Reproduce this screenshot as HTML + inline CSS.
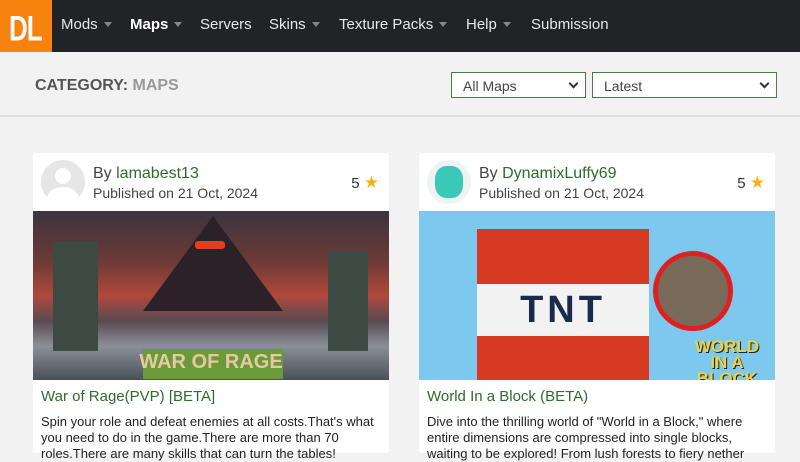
<!DOCTYPE html>
<html><head><meta charset="utf-8"><style>
*{margin:0;padding:0;box-sizing:border-box}
body{width:800px;height:450px;overflow:hidden;background:#f2f2f2;font-family:"Liberation Sans",sans-serif;position:relative}
.nav{position:absolute;left:0;top:0;width:800px;height:52px;background:#222327}
.logo{position:absolute;left:0;top:0;width:52px;height:52px;background:#f7820e;overflow:hidden}
.logo span{position:absolute;left:9px;top:8px;color:#fff;font-weight:bold;font-size:26px;letter-spacing:-1px;transform:scaleY(1.35);transform-origin:top left}
.nav a{position:absolute;top:16px;color:#e8e8e8;font-size:15px}
.car{display:inline-block;width:0;height:0;border-left:4.5px solid transparent;border-right:4.5px solid transparent;border-top:5px solid #888;margin-left:6px;vertical-align:2px}
.cat{position:absolute;left:35px;top:77px;font-size:16px;font-weight:bold;color:#555}
.cat span{color:#999}
.sel{position:absolute;top:72px;height:26px;border:1px solid #4d7a4d;background:#fff;font-size:14px;color:#444;padding:5px 11px}
.sel i{position:absolute;right:8px;top:7px;width:7px;height:7px;border-right:2px solid #333;border-bottom:2px solid #333;transform:rotate(45deg)}
.hr{position:absolute;left:0;top:115px;width:800px;height:2px;background:#ddd}
.card{position:absolute;top:153px;width:356px;height:300px;background:#fff;border-radius:3px}
.av{position:absolute;left:8px;top:7px;width:44px;height:44px;border-radius:50%;background:#e6e6e6;overflow:hidden}
.by{position:absolute;left:60px;top:12px;font-size:16px;color:#444}
.by b{font-weight:normal;color:#2e6b2e}
.pub{position:absolute;left:60px;top:32px;font-size:14px;color:#444}
.rt{position:absolute;right:10px;top:20px;font-size:15px;color:#333}
.rt s{text-decoration:none;color:#f5b21c;font-size:17px}
.img{position:absolute;left:0;top:58px;width:356px;height:169px;overflow:hidden}
.tt{position:absolute;left:8px;top:235px;font-size:15px;color:#2e6b2e}
.ds{position:absolute;left:8px;top:261px;width:340px;font-size:13px;line-height:16px;color:#222}
</style></head><body>
<div class="nav">
<div class="logo"><span>DL</span></div>
<a style="left:61px">Mods<span class="car"></span></a>
<a style="left:130px;font-weight:bold;color:#fff">Maps<span class="car"></span></a>
<a style="left:200px">Servers</a>
<a style="left:269px">Skins<span class="car"></span></a>
<a style="left:339px">Texture Packs<span class="car"></span></a>
<a style="left:466px">Help<span class="car"></span></a>
<a style="left:531px">Submission</a>
</div>
<div class="cat">CATEGORY: <span>MAPS</span></div>
<div class="sel" style="left:451px;width:135px">All Maps<i></i></div>
<div class="sel" style="left:592px;width:185px">Latest<i></i></div>
<div class="hr"></div>

<div class="card" style="left:33px">
<div class="av"><div style="position:absolute;left:14px;top:8px;width:16px;height:16px;border-radius:50%;background:#fff"></div><div style="position:absolute;left:6px;top:27px;width:32px;height:24px;border-radius:50%;background:#fff"></div></div>
<div class="by">By <b>lamabest13</b></div>
<div class="pub">Published on 21 Oct, 2024</div>
<div class="rt">5 <s>★</s></div>
<div class="img" style="background:linear-gradient(180deg,#3b3340 0%,#6d3a36 30%,#b0483a 50%,#5a4a52 65%,#8a9098 80%,#4a5058 100%)">
<div style="position:absolute;left:110px;top:5px;width:140px;height:95px;background:#2a2228;clip-path:polygon(50% 0,100% 100%,0 100%)"></div>
<div style="position:absolute;left:162px;top:30px;width:30px;height:8px;background:#e04020;border-radius:3px"></div>
<div style="position:absolute;left:20px;top:30px;width:45px;height:110px;background:#3d4a44"></div>
<div style="position:absolute;left:295px;top:40px;width:40px;height:100px;background:#3d4a44"></div>
<div style="position:absolute;left:110px;top:138px;width:140px;height:30px;background:#6a9a3a"></div>
<div style="position:absolute;left:0;top:140px;width:356px;text-align:center;color:#e8c8a0;font-weight:bold;font-size:20px">WAR OF RAGE</div>
</div>
<div class="tt">War of Rage(PVP) [BETA]</div>
<div class="ds">Spin your role and defeat enemies at all costs.That's what you need to do in the game.There are more than 70 roles.There are many skills that can turn the tables!</div>
</div>

<div class="card" style="left:419px">
<div class="av" style="background:#eef4f4"><div style="position:absolute;left:8px;top:6px;width:28px;height:32px;border-radius:40%;background:#3cc8b8"></div></div>
<div class="by">By <b>DynamixLuffy69</b></div>
<div class="pub">Published on 21 Oct, 2024</div>
<div class="rt">5 <s>★</s></div>
<div class="img" style="background:#7cc8ee">
<div style="position:absolute;left:58px;top:18px;width:172px;height:55px;background:#d63a22"></div>
<div style="position:absolute;left:58px;top:73px;width:172px;height:52px;background:#f2f2f2"></div>
<div style="position:absolute;left:58px;top:125px;width:172px;height:44px;background:#d63a22"></div>
<div style="position:absolute;left:58px;top:78px;width:172px;text-align:center;font-weight:bold;font-size:38px;color:#1a2a4a;letter-spacing:4px">TNT</div>
<div style="position:absolute;left:234px;top:40px;width:80px;height:80px;border-radius:50%;border:5px solid #e02020;background:#7a6a5a"></div>
<div style="position:absolute;left:262px;top:128px;width:92px;height:36px;color:#f0d040;font-weight:bold;font-size:17px;line-height:16px;text-align:center;text-shadow:1px 1px #222">WORLD<br>IN A BLOCK</div>
</div>
<div class="tt">World In a Block (BETA)</div>
<div class="ds">Dive into the thrilling world of "World in a Block," where entire dimensions are compressed into single blocks, waiting to be explored! From lush forests to fiery nether</div>
</div>
</body></html>
